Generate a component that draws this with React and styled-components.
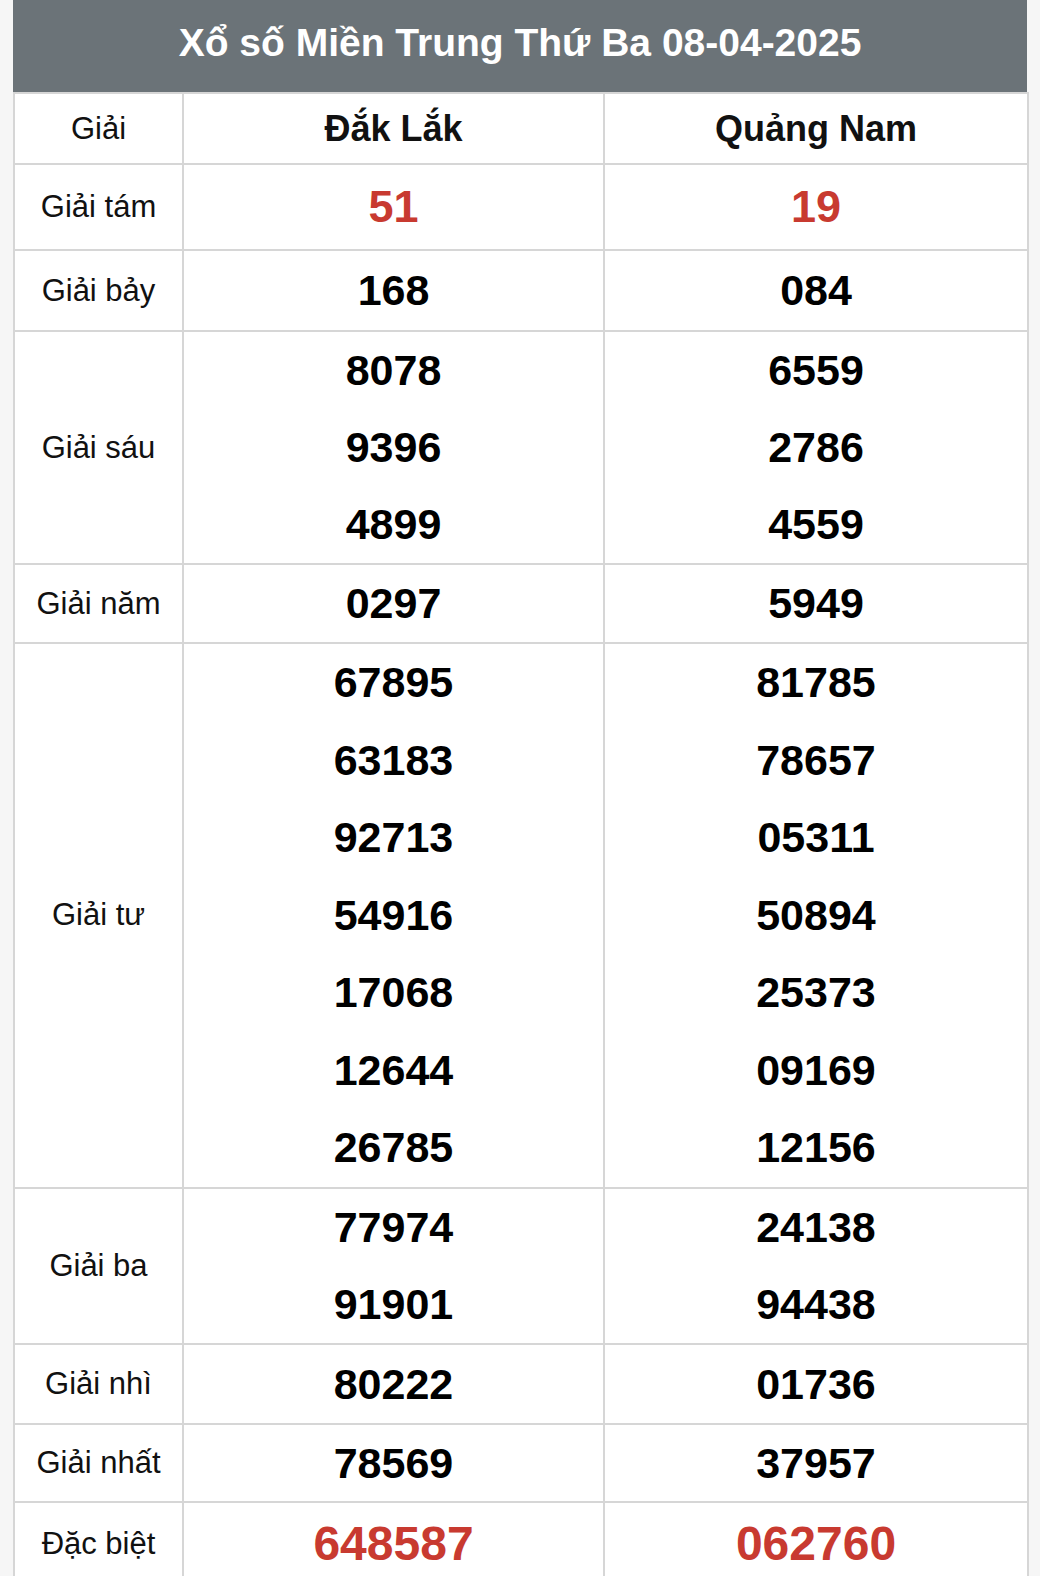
import React from "react";
import styled, { createGlobalStyle } from "styled-components";

const GlobalStyle = createGlobalStyle`
  html, body {
    margin: 0;
    padding: 0;
    background: #f6f6f6;
  }
  body {
    font-family: "Liberation Sans", Arial, sans-serif;
  }
`;

const Page = styled.div`
  padding: 0 13px;
`;

const Board = styled.div`
  width: 1014px;
  background: #fff;
`;

const Title = styled.div`
  height: 92px;
  box-sizing: border-box;
  padding-bottom: 6px;
  background: #6b7378;
  color: #fff;
  font-size: 39px;
  font-weight: 700;
  display: flex;
  align-items: center;
  justify-content: center;
`;

const Table = styled.table`
  width: 100%;
  border-collapse: collapse;
  table-layout: fixed;
  background: #fff;
  border: 2px solid #d6d6d6;
  border-top: none;

  td {
    border: 2px solid #d6d6d6;
    padding: 0;
    text-align: center;
    vertical-align: middle;
  }
`;

const HeadRow = styled.tr`
  height: 71px;
`;

const Label = styled.td`
  font-size: 31px;
  color: #111;
`;

const Province = styled.td`
  font-size: 36px;
  font-weight: 700;
  color: #111;
`;

const Numbers = styled.td`
  color: ${({ $red }) => ($red ? "#c83a30" : "#000")};
  font-size: ${({ $size }) => $size}px;
  font-weight: 700;
`;

const Line = styled.div`
  height: ${({ $h }) => $h}px;
  line-height: ${({ $h }) => $h}px;
`;

const rows = [
  { label: "Giải tám", a: ["51"], b: ["19"], red: true, size: 45, h: 84 },
  { label: "Giải bảy", a: ["168"], b: ["084"], size: 43, h: 79 },
  { label: "Giải sáu", a: ["8078", "9396", "4899"], b: ["6559", "2786", "4559"], size: 43, h: 77 },
  { label: "Giải năm", a: ["0297"], b: ["5949"], size: 43, h: 77 },
  {
    label: "Giải tư",
    a: ["67895", "63183", "92713", "54916", "17068", "12644", "26785"],
    b: ["81785", "78657", "05311", "50894", "25373", "09169", "12156"],
    size: 43,
    h: 77.5,
  },
  { label: "Giải ba", a: ["77974", "91901"], b: ["24138", "94438"], size: 43, h: 77 },
  { label: "Giải nhì", a: ["80222"], b: ["01736"], size: 43, h: 78 },
  { label: "Giải nhất", a: ["78569"], b: ["37957"], size: 43, h: 76 },
  { label: "Đặc biệt", a: ["648587"], b: ["062760"], red: true, size: 48, h: 82 },
];

export default function App() {
  return (
    <>
      <GlobalStyle />
      <Page>
        <Board>
          <Title>Xổ số Miền Trung Thứ Ba 08-04-2025</Title>
          <Table>
            <colgroup>
              <col style={{ width: 169 }} />
              <col style={{ width: 421 }} />
              <col style={{ width: 424 }} />
            </colgroup>
            <tbody>
              <HeadRow>
                <Label>Giải</Label>
                <Province>Đắk Lắk</Province>
                <Province>Quảng Nam</Province>
              </HeadRow>
              {rows.map((r) => (
                <tr key={r.label}>
                  <Label>{r.label}</Label>
                  <Numbers $red={r.red} $size={r.size}>
                    {r.a.map((n) => (
                      <Line key={n} $h={r.h}>{n}</Line>
                    ))}
                  </Numbers>
                  <Numbers $red={r.red} $size={r.size}>
                    {r.b.map((n) => (
                      <Line key={n} $h={r.h}>{n}</Line>
                    ))}
                  </Numbers>
                </tr>
              ))}
            </tbody>
          </Table>
        </Board>
      </Page>
    </>
  );
}
